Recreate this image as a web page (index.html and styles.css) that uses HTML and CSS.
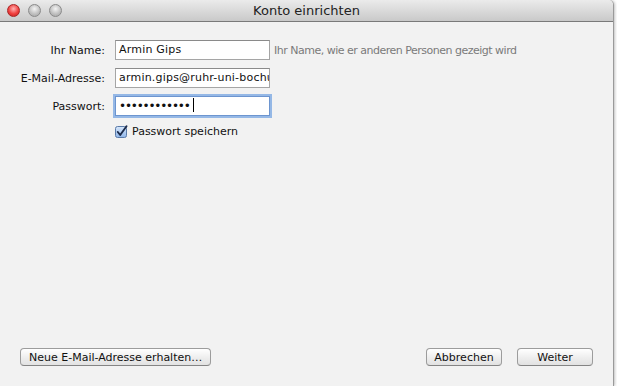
FILE: index.html
```html
<!DOCTYPE html>
<html lang="de">
<head>
    <meta charset="UTF-8">
    <title>Konto einrichten</title>
    <link rel="stylesheet" href="styles.css">
</head>
<body>

<div class="window">
    <div class="titlebar">
        <div class="lights">
            <span class="light close"></span>
            <span class="light"></span>
            <span class="light"></span>
        </div>
        <div class="title">Konto einrichten</div>
    </div>

    <div class="content">
        <div class="form">
            <label>Ihr Name:</label>
            <div class="field-row">
                <div class="field">Armin Gips</div>
                <span class="hint">Ihr Name, wie er anderen Personen gezeigt wird</span>
            </div>

            <label>E-Mail-Adresse:</label>
            <div class="field-row">
                <div class="field">armin.gips@ruhr-uni-bochum.de</div>
            </div>

            <label>Passwort:</label>
            <div class="field-row">
                <div class="field focused">&bull;&bull;&bull;&bull;&bull;&bull;&bull;&bull;&bull;&bull;&bull;&bull;<span class="caret"></span></div>
            </div>

            <span></span>
            <div class="check-row">
                <svg class="checkbox" width="13" height="13" viewBox="0 0 13 13">
                    <defs>
                        <linearGradient id="cb" x1="0" y1="0" x2="0" y2="1">
                            <stop offset="0" stop-color="#d7e7fb"/>
                            <stop offset="1" stop-color="#8fb5e8"/>
                        </linearGradient>
                    </defs>
                    <rect x="0.5" y="1.5" width="11" height="11" rx="2" fill="url(#cb)" stroke="#5a7aa8"/>
                    <path d="M2.8 7 L5.2 10 L11.5 1.2" fill="none" stroke="#1b2a4a" stroke-width="1.9" stroke-linecap="round" stroke-linejoin="round"/>
                </svg>
                <span>Passwort speichern</span>
            </div>
        </div>

        <div class="buttons">
            <button class="btn">Neue E-Mail-Adresse erhalten…</button>
            <div class="right-buttons">
                <button class="btn small">Abbrechen</button>
                <button class="btn small">Weiter</button>
            </div>
        </div>
    </div>
</div>

</body>
</html>
```

FILE: styles.css
```css
body {
    margin: 0;
    padding: 0;
    background-color: #ffffff;
    font-family: "DejaVu Sans", sans-serif;
    font-size: 11px;
    color: #111;
}
.window {
    width: 613px;
    height: 386px;
    display: flex;
    flex-direction: column;
    background-color: #f2f2f2;
    border-right: 1px solid #9a9a9a;
    border-top-right-radius: 5px;
    box-shadow: 1px 0 3px rgba(0, 0, 0, 0.25);
}
.titlebar {
    height: 22px;
    display: flex;
    align-items: center;
    position: relative;
    background: linear-gradient(#ebebeb, #c9c9c9);
    border-bottom: 1px solid #7a7a7a;
    border-top-right-radius: 5px;
    box-sizing: border-box;
}
.lights {
    display: flex;
    gap: 8px;
    padding-left: 7px;
}
.light {
    width: 13px;
    height: 13px;
    border-radius: 50%;
    background: radial-gradient(circle at 50% 35%, #f4f4f4, #bdbdbd 60%, #a5a5a5);
    border: 1px solid #8a8a8a;
    box-sizing: border-box;
}
.light.close {
    background: radial-gradient(circle at 50% 35%, #ffb3b3, #f0403f 55%, #c21f1f);
    border-color: #a82525;
}
.title {
    position: absolute;
    left: 0;
    right: 0;
    text-align: center;
    font-size: 13px;
    color: #222;
    pointer-events: none;
}
.content {
    flex: 1;
    display: flex;
    flex-direction: column;
    justify-content: space-between;
    padding: 18px 20px 20px 0;
}
.form {
    display: grid;
    grid-template-columns: 105px auto;
    column-gap: 10px;
    row-gap: 8px;
    align-items: center;
}
.form label {
    text-align: right;
}
.field-row {
    display: flex;
    align-items: center;
    gap: 4px;
}
.field {
    width: 155px;
    height: 20px;
    box-sizing: border-box;
    padding: 0 3px;
    line-height: 18px;
    background-color: #fff;
    border: 1px solid #a5a5a5;
    border-top-color: #8a8a8a;
    white-space: nowrap;
    overflow: hidden;
    font-size: 11px;
    letter-spacing: 0.2px;
}
.field.focused {
    border-color: #6d95cf;
    box-shadow: 0 0 0 2px rgba(110, 160, 225, 0.7);
    font-size: 12px;
    letter-spacing: -1.2px;
}
.caret {
    display: inline-block;
    width: 1px;
    height: 14px;
    margin-left: 3px;
    vertical-align: -2px;
    background-color: #000;
}
.hint {
    color: #7a7a7a;
    letter-spacing: -0.5px;
}
.check-row {
    display: flex;
    align-items: center;
    gap: 4px;
    margin-top: 1px;
}
.buttons {
    display: flex;
    justify-content: space-between;
    padding-left: 20px;
}
.right-buttons {
    display: flex;
    gap: 15px;
}
.btn {
    height: 18px;
    padding: 0 8px;
    font-family: "DejaVu Sans", sans-serif;
    font-size: 11px;
    color: #111;
    background: linear-gradient(#ffffff, #ececec 60%, #e2e2e2);
    border: 1px solid #9c9c9c;
    border-bottom-color: #848484;
    border-radius: 4px;
    margin-top: 1px;
}
.btn.small {
    width: 76px;
    padding: 0;
}
```
